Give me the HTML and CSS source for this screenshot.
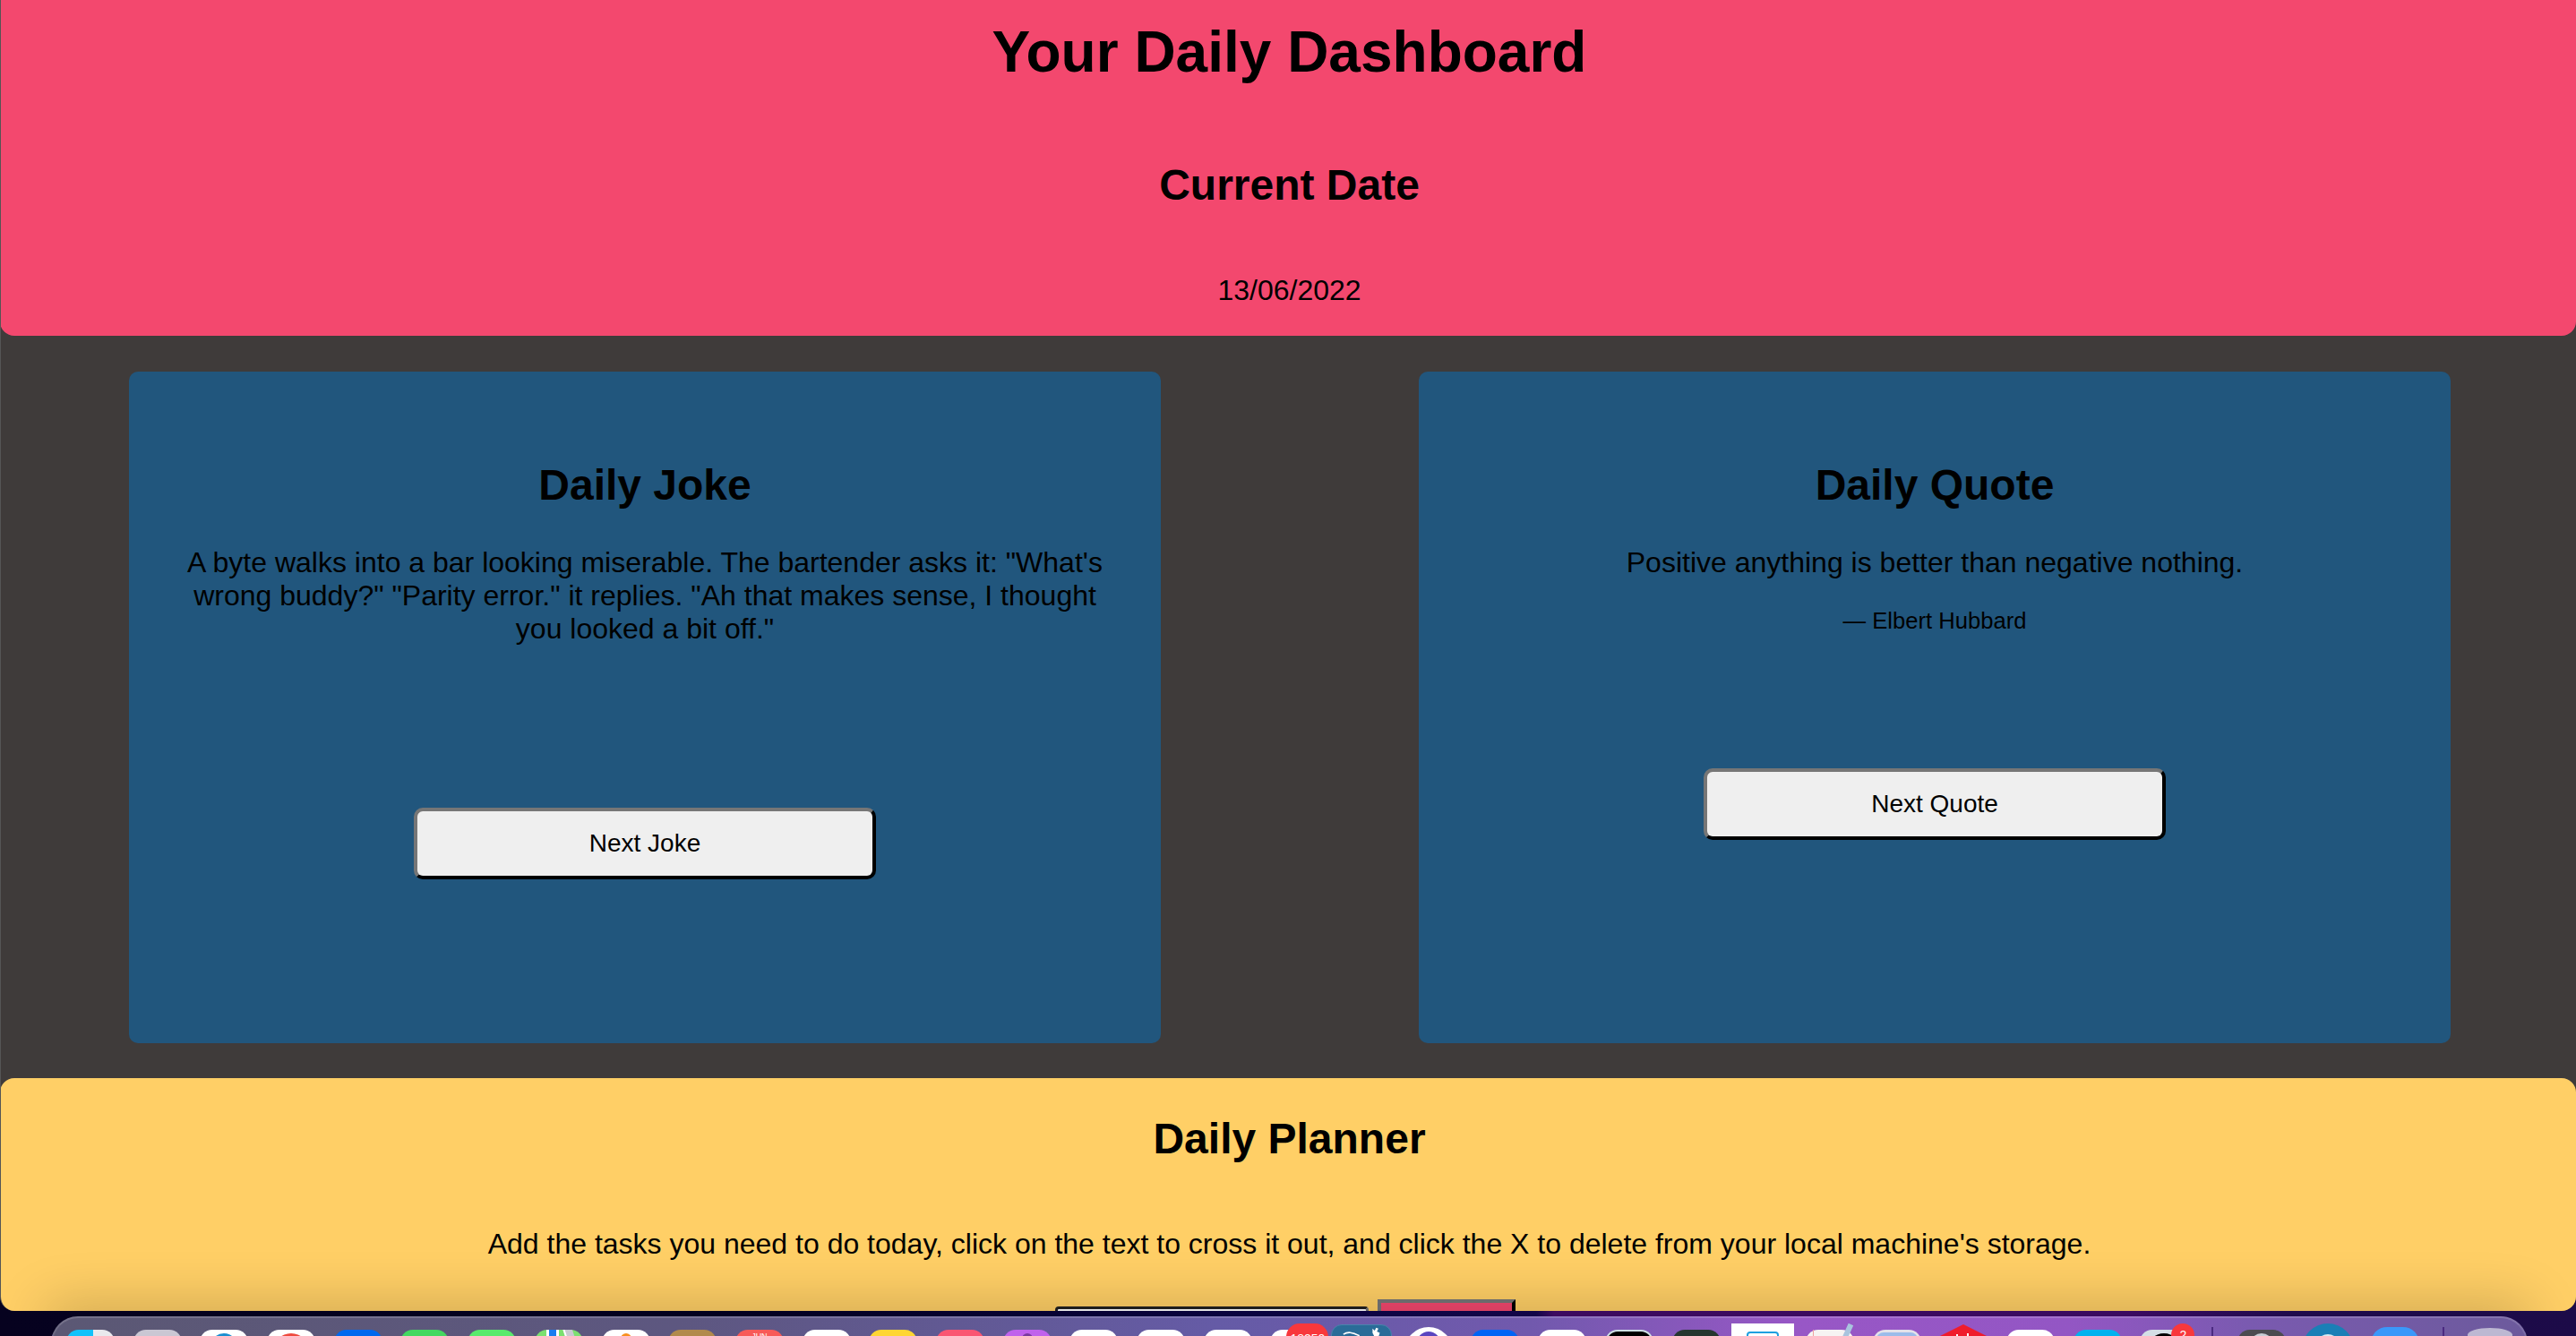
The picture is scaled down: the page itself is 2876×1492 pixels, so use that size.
FILE: index.html
```html
<!DOCTYPE html>
<html>
<head>
	<meta charset="utf-8">
	<title>Your Daily Dashboard</title>
	<link rel="stylesheet" href="styles.css">
</head>
<body>

	<main class="ventana">
		<header class="cabecera">
			<h1>Your Daily Dashboard</h1>
			<h2 class="tituloFecha">Current Date</h2>
			<p class="fecha">13/06/2022</p>
		</header>

		<section class="tarjetas">
			<article class="tarjeta">
				<h2>Daily Joke</h2>
				<p>A byte walks into a bar looking miserable. The bartender asks it: "What's wrong buddy?" "Parity error." it replies. "Ah that makes sense, I thought you looked a bit off."</p>
				<button class="boton botonChiste">Next Joke</button>
			</article>
			<article class="tarjeta">
				<h2>Daily Quote</h2>
				<p>Positive anything is better than negative nothing.</p>
				<p class="autor">— Elbert Hubbard</p>
				<button class="boton botonCita">Next Quote</button>
			</article>
		</section>

		<section class="planificador">
			<h2>Daily Planner</h2>
			<p>Add the tasks you need to do today, click on the text to cross it out, and click the X to delete from your local machine's storage.</p>
			<form class="formTarea">
				<input class="campoTarea" type="text">
				<button class="botonTarea" type="button"></button>
			</form>
		</section>
	</main>

	<!-- dock del sistema, solo se ve la parte de arriba -->
	<footer class="dock">
		<span class="icono finder"></span>
		<span class="icono launchpad"></span>
		<span class="icono blanco"><i class="marca safari"></i></span>
		<span class="icono blanco"><i class="marca chrome"></i></span>
		<span class="icono mail"></span>
		<span class="icono facetime"></span>
		<span class="icono mensajes"></span>
		<span class="icono mapas"><i class="marca rutaAzul"></i><i class="marca rutaGris"></i></span>
		<span class="icono blanco"><i class="marca fotos"></i></span>
		<span class="icono contactos"></span>
		<span class="icono calendario">JUN</span>
		<span class="icono blanco"></span>
		<span class="icono notas"></span>
		<span class="icono musica"></span>
		<span class="icono podcast"><i class="marca podcastPunto"></i></span>
		<span class="icono blanco"></span>
		<span class="icono blanco"></span>
		<span class="icono blanco"></span>
		<span class="icono blanco"><b class="globo globoAncho">18350</b></span>
		<span class="icono herramienta">
			<svg viewBox="0 0 68 16" width="68" height="13"><path d="M8 10C14 6 20 7 30 12" fill="none" stroke="#fff" stroke-width="2"/><path d="M48 2l3 3 2-4 3 1-2 4 4 2-2 6h-5l-3-6z" fill="#fff"/></svg>
		</span>
		<span class="icono circuloBlanco"><i class="marca luna"></i></span>
		<span class="icono azulFuerte"></span>
		<span class="icono blanco"></span>
		<span class="icono terminal"><i class="marca terminalDentro"></i></span>
		<span class="icono verdeOscuro"></span>
		<span class="icono cuadroBlanco"><i class="marca cuadroAzul"></i></span>
		<span class="icono papel"><i class="marca lapiz"></i></span>
		<span class="icono gris"><i class="marca grisDentro"></i></span>
		<span class="icono rombo">
			<svg viewBox="0 0 56 14" width="56" height="14"><path d="M28 0L56 14H0z" fill="#f01c2c"/><path d="M20 11h2v3h-2zM32 10h2v4h-2z" fill="#fff"/></svg>
		</span>
		<span class="icono blanco"></span>
		<span class="icono celeste"></span>
		<span class="icono claro"><i class="marca cupula"></i><b class="globo">2</b></span>
		<span class="separador"></span>
		<span class="icono grafito"><i class="marca grafitoDentro"></i></span>
		<span class="icono circuloAzul"><i class="marca circuloDentro"></i></span>
		<span class="icono azulClaro"></span>
		<span class="separador"></span>
		<span class="icono papelera"></span>
	</footer>

</body>
</html>
```

FILE: styles.css
```css
*{box-sizing: border-box;}
html, body{height: 100%;}
body{
	margin: 0;
	height: 1492px;
	overflow: hidden;
	display: flex;
	flex-direction: column;
	font-family: "Liberation Sans", Arial, sans-serif;
	color: #000;
	background: linear-gradient(90deg, #06021f 0, #03001f 800px, #0a0440 1400px, #120548 1715px, #3c0a5f 1735px, #3a0a60 2380px, #1f0b4c 2560px, #1c0b48 100%);
}
h1, h2, p{margin: 0;}
h2{font-size: 48px;}
p{font-size: 32px;}

.ventana{
	flex: none;
	height: 1464px;
	overflow: hidden;
	border-radius: 0 0 16px 16px;
	background: #3f3b3a;
	border-left: 1px solid #555;
}

/* cabecera */
.cabecera{
	height: 375px;
	margin-left: -1px;
	padding: 21px 0 0 3px;
	text-align: center;
	background: #f3486e;
	border-radius: 0 0 16px 16px;
}
.cabecera h1{font-size: 64px;}
.tituloFecha{margin-top: 84px;}
.fecha{margin-top: 72px;}

/* tarjetas */
.tarjetas{
	display: flex;
	justify-content: space-between;
	padding: 40px 140px 39px 143px;
}
.tarjeta{
	width: 1152px;
	height: 750px;
	padding: 99px 64px 0;
	text-align: center;
	background: #21567d;
	border-radius: 10px;
}
.tarjeta h2{margin-bottom: 41px;}
.autor{margin-top: 32px; font-size: 25.6px;}
.boton{
	display: block;
	width: 516px;
	height: 80px;
	margin: 0 auto;
	font-family: inherit;
	font-size: 28px;
	color: #000;
	background: #efefef;
	border: 4px outset #767676;
	border-color: #767676 #212121 #212121 #767676;
	border-radius: 10px;
}
.botonChiste{margin-top: 181px;}
.botonCita{margin-top: 150px;}

/* planificador */
.planificador{
	position: relative;
	height: 300px;
	margin-left: -1px;
	padding: 40px 0 0 3px;
	text-align: center;
	background: #ffcf66;
	border-radius: 16px;
}
.planificador::after{
	content: "";
	position: absolute;
	left: 60px;
	right: 60px;
	top: 262px;
	height: 30px;
	box-shadow: 0 0 60px 8px rgba(0, 0, 0, .22);
	pointer-events: none;
}
.planificador p{margin-top: 72px;}
.formTarea{
	display: flex;
	justify-content: center;
	align-items: flex-start;
	gap: 10px;
	margin: 43px 9px 0 0;
}
.campoTarea{
	width: 350px;
	height: 60px;
	margin-top: 8px;
	background: #fff;
	border: 3px inset #767676;
	border-radius: 4px;
}
.botonTarea{
	width: 154px;
	height: 80px;
	background: #f3486e;
	border: 4px outset #767676;
	border-color: #767676 #212121 #212121 #767676;
}

/* dock */
.dock{
	flex: none;
	display: flex;
	align-items: flex-start;
	gap: 20.7px;
	height: 30px;
	margin: 6px 54px 0 57px;
	padding: 13px 0 0 15px;
	border-top: 2px solid rgba(255, 255, 255, .16);
	border-left: 2px solid rgba(255, 255, 255, .12);
	border-right: 2px solid rgba(255, 255, 255, .12);
	border-radius: 34px 34px 0 0;
	background: linear-gradient(90deg, #5b5874 0, #5d5780 700px, #655ba6 1300px, #7159ad 1650px, #9857c6 1950px, #9356c4 2250px, #7a5ab0 2450px, #6c5a9c 100%);
}
.icono{
	position: relative;
	flex: none;
	display: block;
	width: 54px;
	height: 54px;
	border-radius: 14px;
	overflow: hidden;
}
.marca{position: absolute; display: block;}
.blanco{background: #fff;}
.finder{background: linear-gradient(90deg, #12c2fa 55%, #e9e9ed 55%);}
.launchpad{background: #cac7d3;}
.safari{left: 12px; top: 4px; width: 30px; height: 30px; border-radius: 50%; background: #1a8fd0;}
.chrome{left: 7px; top: 4px; width: 40px; height: 40px; border-radius: 50%; background: #ee4b3f;}
.mail{background: #0068ee;}
.facetime{background: #44d860;}
.mensajes{background: #58ea6c;}
.mapas{background: #7ce070;}
.rutaAzul{left: 13px; top: 0; width: 14px; height: 20px; background: #1a7cf0; border-left: 3px solid #fff; border-right: 3px solid #fff;}
.rutaGris{left: 34px; top: -3px; width: 10px; height: 20px; background: #c9c9d2; border-left: 2px solid #fff; transform: rotate(-18deg);}
.fotos{left: 21px; top: 4px; width: 12px; height: 20px; border-radius: 6px; background: #f89020;}
.contactos{background: #b28a4c;}
.calendario{
	background: #f85a58;
	color: #fff;
	font-size: 9px;
	line-height: 12px;
	text-align: center;
	padding-top: 1px;
}
.notas{background: #ffd633;}
.musica{background: #fa5672;}
.podcast{background: #c062ec;}
.podcastPunto{left: 21px; top: 4px; width: 12px; height: 12px; border-radius: 50%; background: #7a3a9e;}

.herramienta{
	width: 68px;
	margin: -6px -7px 0;
	border-radius: 12px;
	background: #2a6c98;
	border: 1px solid #4a84ac;
}
.herramienta svg{display: block; margin-top: 2px;}
.circuloBlanco{margin-top: -3px; border-radius: 50%; background: #fff;}
.luna{left: 14px; top: 5px; width: 26px; height: 26px; border-radius: 50%; background: #5a46c0;}
.azulFuerte{background: #0064f5;}
.terminal{background: #cfe0e6;}
.terminalDentro{left: 2px; top: 2px; width: 50px; height: 50px; border-radius: 12px; background: #000;}
.verdeOscuro{background: #26352f;}
.cuadroBlanco{
	width: 70px;
	margin: -7px -8px 0;
	border-radius: 0;
	background: #fff;
}
.cuadroAzul{left: 17px; top: 9px; width: 36px; height: 30px; border: 2px solid #1fa0e0; border-radius: 4px;}
.papel{background: #f6f3f2; overflow: visible;}
.papel::before{content: ""; position: absolute; left: 8px; top: 0; width: 1px; height: 10px; background: #f0a0a0;}
.lapiz{left: 43px; top: -7px; width: 6px; height: 22px; background: #a9c4de; transform: rotate(24deg);}
.gris{background: #e4e2ea;}
.grisDentro{left: 4px; top: 3px; width: 46px; height: 30px; border-radius: 8px; background: #9cbcea;}
.rombo{
	width: 56px;
	height: 14px;
	margin: -6px -1px 0;
	border-radius: 0;
	overflow: visible;
}
.rombo svg{display: block;}
.celeste{background: #00b2ee;}
.claro{background: #d5dfe6; overflow: visible;}
.cupula{left: 8px; top: 4px; width: 38px; height: 38px; border-radius: 50%; background: #000;}
.globo{
	position: absolute;
	top: -7px;
	left: 35px;
	width: 26px;
	height: 26px;
	border-radius: 50%;
	background: #f8383c;
	color: #fff;
	font-size: 14px;
	font-weight: normal;
	line-height: 26px;
	text-align: center;
}
.icono:has(.globo){overflow: visible;}
.globoAncho{
	left: 18px;
	width: 47px;
	border-radius: 24px;
	height: 30px;
	line-height: 34px;
}
.separador{
	flex: none;
	width: 2px;
	height: 20px;
	margin: -3px 6px 0 5px;
	background: #4b2a80;
}
.grafito{background: #4c4b50;}
.grafitoDentro{left: 14px; top: 4px; width: 26px; height: 26px; border-radius: 50%; background: #c7ccd4;}
.circuloAzul{width: 58px; height: 58px; margin: -7px -2px 0; border-radius: 50%; background: #1a7fb6;}
.circuloDentro{left: 16px; top: 12px; width: 26px; height: 26px; border-radius: 50%; background: #d8eaf2;}
.azulClaro{margin-top: -3px; border-radius: 18px; background: #3a98fa;}
.papelera{margin-top: -2px; width: 50px; border-radius: 50% 50% 0 0 / 14% 14% 0 0; background: #bdb8d2;}
```
